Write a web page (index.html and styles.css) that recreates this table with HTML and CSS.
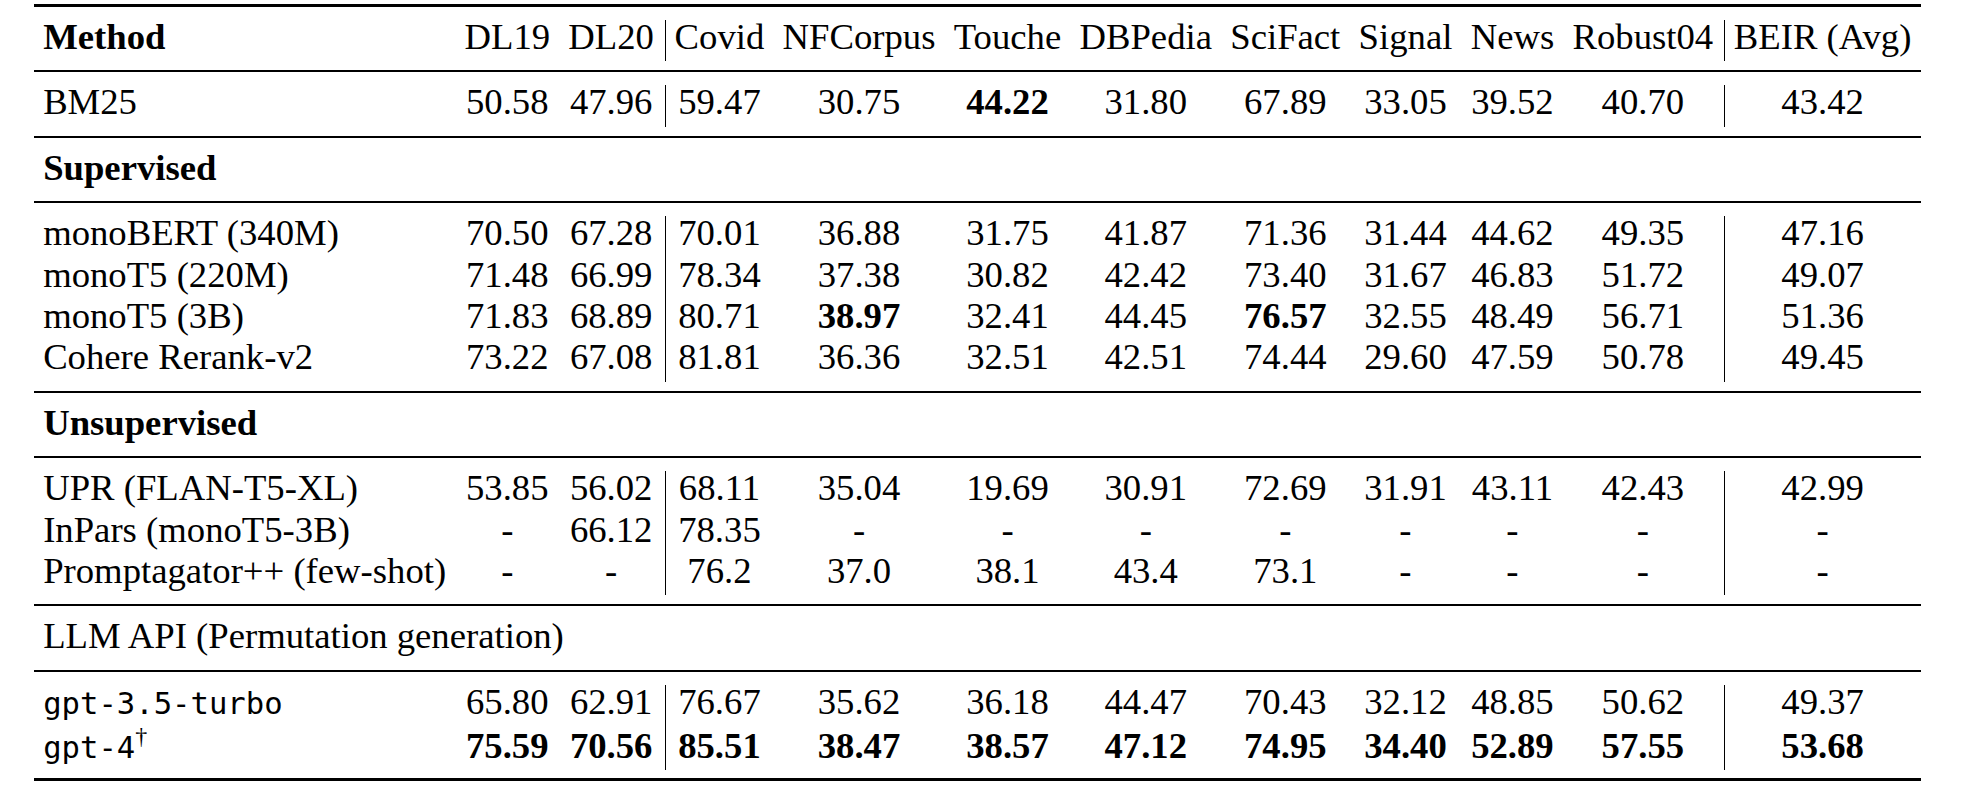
FILE: index.html
```html
<!DOCTYPE html>
<html lang="en">
<head>
<meta charset="utf-8">
<title>Reranking results</title>
<link rel="stylesheet" href="styles.css">
</head>
<body>
<table class="results">
  <thead>
    <tr>
      <th class="method">Method</th>
      <th>DL19</th><th>DL20</th>
      <th class="vl">Covid</th><th>NFCorpus</th><th>Touche</th><th>DBPedia</th><th>SciFact</th><th>Signal</th><th>News</th><th>Robust04</th>
      <th class="vl">BEIR (Avg)</th>
    </tr>
  </thead>
  <tbody>
    <tr>
      <td class="method">BM25</td>
      <td>50.58</td><td>47.96</td>
      <td class="vl">59.47</td><td>30.75</td><td class="best">44.22</td><td>31.80</td><td>67.89</td><td>33.05</td><td>39.52</td><td>40.70</td>
      <td class="vl">43.42</td>
    </tr>
  </tbody>
  <tbody>
    <tr><td class="method group" colspan="12">Supervised</td></tr>
  </tbody>
  <tbody>
    <tr>
      <td class="method">monoBERT (340M)</td>
      <td>70.50</td><td>67.28</td>
      <td class="vl">70.01</td><td>36.88</td><td>31.75</td><td>41.87</td><td>71.36</td><td>31.44</td><td>44.62</td><td>49.35</td>
      <td class="vl">47.16</td>
    </tr>
    <tr>
      <td class="method">monoT5 (220M)</td>
      <td>71.48</td><td>66.99</td>
      <td class="vl">78.34</td><td>37.38</td><td>30.82</td><td>42.42</td><td>73.40</td><td>31.67</td><td>46.83</td><td>51.72</td>
      <td class="vl">49.07</td>
    </tr>
    <tr>
      <td class="method">monoT5 (3B)</td>
      <td>71.83</td><td>68.89</td>
      <td class="vl">80.71</td><td class="best">38.97</td><td>32.41</td><td>44.45</td><td class="best">76.57</td><td>32.55</td><td>48.49</td><td>56.71</td>
      <td class="vl">51.36</td>
    </tr>
    <tr>
      <td class="method">Cohere Rerank-v2</td>
      <td>73.22</td><td>67.08</td>
      <td class="vl">81.81</td><td>36.36</td><td>32.51</td><td>42.51</td><td>74.44</td><td>29.60</td><td>47.59</td><td>50.78</td>
      <td class="vl">49.45</td>
    </tr>
  </tbody>
  <tbody>
    <tr><td class="method group" colspan="12">Unsupervised</td></tr>
  </tbody>
  <tbody>
    <tr>
      <td class="method">UPR (FLAN-T5-XL)</td>
      <td>53.85</td><td>56.02</td>
      <td class="vl">68.11</td><td>35.04</td><td>19.69</td><td>30.91</td><td>72.69</td><td>31.91</td><td>43.11</td><td>42.43</td>
      <td class="vl">42.99</td>
    </tr>
    <tr>
      <td class="method">InPars (monoT5-3B)</td>
      <td>-</td><td>66.12</td>
      <td class="vl">78.35</td><td>-</td><td>-</td><td>-</td><td>-</td><td>-</td><td>-</td><td>-</td>
      <td class="vl">-</td>
    </tr>
    <tr>
      <td class="method">Promptagator++ (few-shot)</td>
      <td>-</td><td>-</td>
      <td class="vl">76.2</td><td>37.0</td><td>38.1</td><td>43.4</td><td>73.1</td><td>-</td><td>-</td><td>-</td>
      <td class="vl">-</td>
    </tr>
  </tbody>
  <tbody>
    <tr><td class="method" colspan="12">LLM API (Permutation generation)</td></tr>
  </tbody>
  <tbody>
    <tr>
      <td class="method"><span class="mono">gpt-3.5-turbo</span></td>
      <td>65.80</td><td>62.91</td>
      <td class="vl">76.67</td><td>35.62</td><td>36.18</td><td>44.47</td><td>70.43</td><td>32.12</td><td>48.85</td><td>50.62</td>
      <td class="vl">49.37</td>
    </tr>
    <tr class="raised">
      <td class="method"><span class="mono">gpt-4</span><sup>&dagger;</sup></td>
      <td class="best">75.59</td><td class="best">70.56</td>
      <td class="vl best">85.51</td><td class="best">38.47</td><td class="best">38.57</td><td class="best">47.12</td><td class="best">74.95</td><td class="best">34.40</td><td class="best">52.89</td><td class="best">57.55</td>
      <td class="vl best">53.68</td>
    </tr>
  </tbody>
</table>
</body>
</html>
```

FILE: styles.css
```css
html, body {
  margin: 0;
  background: #ffffff;
}

body {
  padding: 4px 0 0 34px;
}

.results {
  border-collapse: separate;
  border-spacing: 0;
  font-family: "Liberation Serif", "Times New Roman", serif;
  font-size: 36.7px;
  color: #000;
}

.results th,
.results td {
  position: relative;
  padding: 0 9.15px 8px;
  line-height: 33.4px;
  text-align: center;
  vertical-align: baseline;
  white-space: nowrap;
  font-weight: 400;
}

.results .vl {
  padding-left: 11.5px;
}

/* booktabs-like rules */
.results thead th {
  border-top: 3px solid #000;
  padding-top: 13px;
  padding-bottom: 17px;
}

.results tbody tr:first-child td {
  border-top: 2px solid #000;
  padding-top: 13px;
}

.results tbody tr:last-child td {
  padding-bottom: 17px;
}

.results tbody:last-child tr:last-child td {
  border-bottom: 3px solid #000;
  padding-bottom: 16px;
}

.results tr.raised td {
  padding-top: 2.5px;
}

/* vertical separators (drawn only over the row box, not the rule gaps) */
.results .vl::before {
  content: "";
  position: absolute;
  left: 1.6px;
  top: 0;
  bottom: 0;
  border-left: 1.4px solid #000;
}

.results thead .vl::before,
.results tbody tr:first-child .vl::before {
  top: 13px;
}

.results thead .vl::before,
.results tbody tr:last-child .vl::before {
  bottom: 9px;
}

.results tbody:last-child tr:last-child .vl::before {
  bottom: 8px;
}

.results th.method,
.results td.method {
  text-align: left;
}

.results thead th.method,
.results .group,
.results .best {
  font-weight: 700;
}

.mono {
  font-family: "DejaVu Sans Mono", "Liberation Mono", monospace;
  font-size: 30.6px;
  line-height: 0;
}

.results sup {
  font-size: 24px;
  line-height: 0;
  vertical-align: 14px;
}
```
